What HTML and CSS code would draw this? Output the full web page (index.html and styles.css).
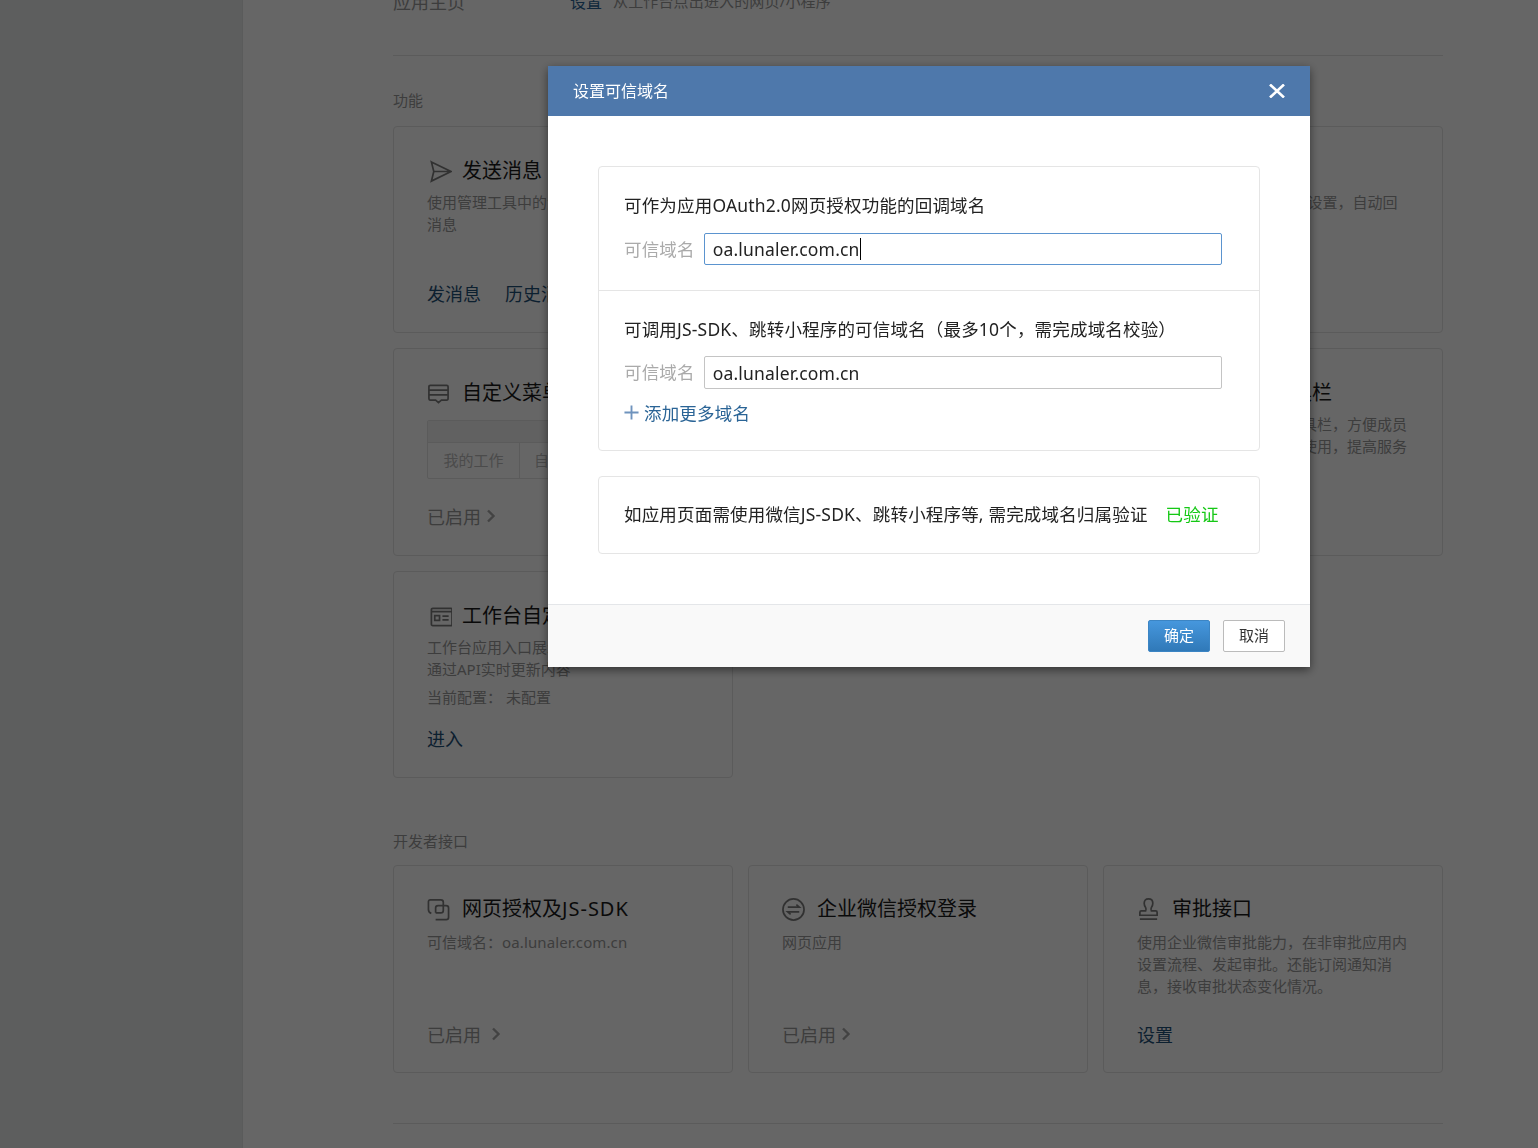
FILE: index.html
```html
<!DOCTYPE html>
<html lang="zh-CN">
<head>
    <meta charset="UTF-8">
    <title>设置可信域名</title>
    <link rel="stylesheet" href="styles.css">
</head>
<body>
    <aside class="sidebar"></aside>

    <main class="content">
        <div class="home-row">
            <span class="home-label">应用主页</span>
            <a class="home-link">设置</a>
            <span class="home-desc">从工作台点出进入的网页/小程序</span>
        </div>

        <h2 class="section-title">功能</h2>
        <div class="grid grid-features">
            <article class="card">
                <h3 class="card-title">
                    <svg class="card-icon icon-shift" viewBox="0 0 24 24"><path d="M2.500 2 L23 12 L2.500 22 L5 12 Z M5 12 H23"/></svg>
                    发送消息
                </h3>
                <p class="card-desc">使用管理工具中的消息群发功能发送应用消息</p>
                <div class="card-foot"><a>发消息</a><a>历史消息</a></div>
            </article>
            <article class="card">
                <h3 class="card-title">
                    <svg class="card-icon" viewBox="0 0 24 24"><path d="M3 4 H21 V18 H3 Z"/></svg>
                    接收消息
                </h3>
                <p class="card-desc">配置服务器接收成员发送给应用的消息</p>
                <div class="card-foot"><a>设置</a></div>
            </article>
            <article class="card">
                <h3 class="card-title">
                    <svg class="card-icon" viewBox="0 0 24 24"><path d="M3 5 H21 V19 H3 Z"/></svg>
                    自动回复
                </h3>
                <p class="card-desc">可在接收消息/回复中进行设置，自动回复成员发送的消息</p>
                <div class="card-foot"><a>设置</a></div>
            </article>

            <article class="card">
                <h3 class="card-title">
                    <svg class="card-icon" viewBox="0 0 24 24"><path d="M3.500 3.500 H20.500 Q22 3.500 22 5 V17 Q22 19 20.500 19 H15 L12 21.500 L9 19 H3.500 Q2 19 2 17 V5 Q2 3.500 3.500 3.500 Z M2 8.500 H22 M2 13.500 H22"/></svg>
                    自定义菜单
                </h3>
                <div class="menu-preview">
                    <div class="menu-bar"></div>
                    <div class="menu-items"><span>我的工作</span><span>自定义项</span><span>更多</span></div>
                </div>
                <div class="card-foot card-status">
                    <span>已启用</span>
                    <svg class="chevron" viewBox="0 0 10 14"><path d="M2 1.500 L7.500 7 L2 12.500"/></svg>
                </div>
            </article>
            <article class="card">
                <h3 class="card-title">
                    <svg class="card-icon" viewBox="0 0 24 24"><path d="M3 4 H21 V18 H3 Z"/></svg>
                    网页授权
                </h3>
                <p class="card-desc">应用可通过网页获取成员的身份信息</p>
            </article>
            <article class="card">
                <h3 class="card-title">
                    <svg class="card-icon" viewBox="0 0 24 24"><path d="M3 5 H21 V19 H3 Z"/></svg>
                    配置到聊天工具栏
                </h3>
                <p class="card-desc">可以把应用配置到聊天工具栏，方便成员在会话中可随时快捷打开使用，提高服务</p>
            </article>

            <article class="card">
                <h3 class="card-title">
                    <svg class="card-icon icon-shift" viewBox="0 0 24 24"><path d="M4 3.500 H23 Q24 3.500 24 5 V20 Q24 21.500 23 21.500 H4 Q2.500 21.500 2.500 20 V5 Q2.500 3.500 4 3.500 Z M2.500 7 H24 M6 11 H11 V16 H6 Z M14 11.500 H20.500 M14 15.500 H20.500"/></svg>
                    工作台自定义展示
                </h3>
                <p class="card-desc">工作台应用入口展示样式可自定义，并可通过API实时更新内容</p>
                <p class="card-config"><span>当前配置：</span><span>未配置</span></p>
                <div class="card-foot"><a>进入</a></div>
            </article>
        </div>

        <h2 class="section-title section-api">开发者接口</h2>
        <div class="grid grid-api">
            <article class="card">
                <h3 class="card-title">
                    <svg class="card-icon" viewBox="0 0 24 24"><path d="M9 2 H3.500 Q1.500 2 1.500 4 V12 Q1.500 15 4.500 16 M9 15.500 V10.500 Q9 8 11.500 8 H20 Q22.500 8 22.500 10.500 V20 Q22.500 22.500 20 22.500 H9 M9 2 H14.500 Q17 2 17 4.500 V13 Q17 15.500 14.500 15.500 H9"/></svg>
                    <span>网页授权及<span class="latin-wide">JS-SDK</span></span>
                </h3>
                <p class="card-desc">可信域名：<span class="domain">oa.lunaler.com.cn</span></p>
                <div class="card-foot card-status status-wide">
                    <span>已启用</span>
                    <svg class="chevron" viewBox="0 0 10 14"><path d="M2 1.500 L7.500 7 L2 12.500"/></svg>
                </div>
            </article>
            <article class="card">
                <h3 class="card-title">
                    <svg class="card-icon" viewBox="0 0 24 24"><circle cx="12" cy="12" r="11"/><path d="M6 9.500 H18 L15 7 M18 14.500 H6 L9 17"/></svg>
                    企业微信授权登录
                </h3>
                <p class="card-desc">网页应用</p>
                <div class="card-foot card-status">
                    <span>已启用</span>
                    <svg class="chevron" viewBox="0 0 10 14"><path d="M2 1.500 L7.500 7 L2 12.500"/></svg>
                </div>
            </article>
            <article class="card">
                <h3 class="card-title">
                    <svg class="card-icon" viewBox="0 0 24 24"><path d="M12 1 Q16.500 1 16.500 5.500 Q16.500 8 15 10 Q14 12 15 13.500 H19.500 Q21 13.500 21 15 V18 H3 V15 Q3 13.500 4.500 13.500 H9 Q10 12 9 10 Q7.500 8 7.500 5.500 Q7.500 1 12 1 Z M3 22 H21"/></svg>
                    审批接口
                </h3>
                <p class="card-desc">使用企业微信审批能力，在非审批应用内设置流程、发起审批。还能订阅通知消息，接收审批状态变化情况。</p>
                <div class="card-foot"><a>设置</a></div>
            </article>
        </div>
        <div class="page-end"></div>
    </main>

    <div class="mask"></div>

    <section class="modal">
        <header class="modal-head">
            <h1>设置可信域名</h1>
            <svg class="modal-close" viewBox="0 0 16 14"><path d="M1 .500 L15 13.500 M15 .500 L1 13.500"/></svg>
        </header>

        <div class="modal-body">
            <div class="panel">
                <div class="panel-part">
                    <p class="panel-text">可作为应用OAuth2.0网页授权功能的回调域名</p>
                    <div class="field-row">
                        <label class="field-label">可信域名</label>
                        <div class="field field-focus">oa.lunaler.com.cn<i class="caret"></i></div>
                    </div>
                </div>
                <div class="panel-part">
                    <p class="panel-text">可调用JS-SDK、跳转小程序的可信域名（最多10个，需完成域名校验）</p>
                    <div class="field-row field-row-tall">
                        <label class="field-label">可信域名</label>
                        <div class="field">oa.lunaler.com.cn</div>
                    </div>
                    <a class="add-more">
                        <svg class="add-icon" viewBox="0 0 16 16"><path d="M8 .500 V15.500 M.500 8 H15.500"/></svg>
                        添加更多域名
                    </a>
                </div>
            </div>

            <div class="panel panel-verify">
                <span>如应用页面需使用微信JS-SDK、跳转小程序等, 需完成域名归属验证</span>
                <span class="verified">已验证</span>
            </div>
        </div>

        <footer class="modal-foot">
            <button class="btn btn-primary">确定</button>
            <button class="btn">取消</button>
        </footer>
    </section>
</body>
</html>
```

FILE: styles.css
```css
* {
    box-sizing: border-box;
}
html, body {
    height: 100%;
}
body {
    margin: 0;
    display: flex;
    overflow: hidden;
    background-color: #ffffff;
    color: #1a1a1a;
    font-family: "Noto Sans", "Noto Sans CJK SC", sans-serif;
    font-size: 15px;
}
a {
    color: #2a6496;
    text-decoration: none;
}
h1, h2, h3, p {
    margin: 0;
    font-weight: normal;
}
.sidebar {
    flex: none;
    width: 243px;
    background-color: #e9eceb;
    border-right: 1px solid #e2e4e3;
}
.content {
    flex: none;
    width: 1050px;
    margin-left: 150px;
}
.home-row {
    display: flex;
    align-items: center;
    height: 69px;
    margin-top: -13px;
    padding-bottom: 41px;
    border-bottom: 1px solid #e4e4e4;
    color: #999999;
}
.home-label {
    width: 177px;
    font-size: 18px;
}
.home-link {
    width: 43px;
    font-size: 16px;
}
.home-desc {
    letter-spacing: .15px;
}
.section-title {
    height: 22px;
    margin: 33px 0 15px;
    color: #999999;
    font-size: 15px;
    line-height: 22px;
}
.section-api {
    margin: 52px 0 13px;
}
.grid {
    display: grid;
    grid-template-columns: repeat(3, 340px);
    gap: 15px;
}
.grid-features {
    grid-template-rows: 207px 208px 207px;
}
.grid-api {
    grid-template-rows: 208px;
}
.card {
    display: flex;
    flex-direction: column;
    padding: 29px 34px 24px 33px;
    border: 1px solid #e4e4e4;
    border-radius: 4px;
}
.grid-api .card {
    padding-top: 28px;
    padding-bottom: 23px;
}
.grid-api .card-title {
    margin-bottom: 7px;
}
.card-title {
    display: flex;
    align-items: center;
    gap: 12px;
    height: 30px;
    margin-bottom: 5px;
    font-size: 20px;
    line-height: 30px;
}
.latin-wide {
    letter-spacing: 1px;
}
.domain {
    letter-spacing: .12px;
}
.card-icon {
    flex: none;
    width: 23px;
    height: 23px;
    fill: none;
    stroke: #7c7c7c;
    stroke-width: 1.8;
}
.icon-shift {
    margin: 0 -2px 0 2px;
}
.card-desc, .card-config {
    color: #999999;
    line-height: 22px;
}
.card-config {
    display: flex;
    gap: 4px;
    margin-top: 6px;
}
.card-foot {
    display: flex;
    align-items: center;
    gap: 24px;
    height: 30px;
    margin-top: auto;
    font-size: 18px;
}
.card-foot a {
    color: #1f5078;
}
.card-status {
    gap: 5px;
    color: #999999;
}
.status-wide {
    gap: 10px;
}
.chevron {
    width: 10px;
    height: 14px;
    fill: none;
    stroke: #a8a8a8;
    stroke-width: 2.4;
}
.menu-preview {
    height: 59px;
    margin-top: 7px;
    border: 1px solid #e4e4e4;
    border-radius: 2px;
}
.menu-bar {
    height: 22px;
    background-color: #f2f2f2;
    border-bottom: 1px solid #e4e4e4;
}
.menu-items {
    display: grid;
    grid-template-columns: 91px 1fr 1fr;
    height: 35px;
    color: #bbbbbb;
    line-height: 35px;
    text-align: center;
}
.menu-items span + span {
    border-left: 1px solid #e4e4e4;
}
.page-end {
    margin-top: 50px;
    border-top: 1px solid #e4e4e4;
}
.mask {
    position: fixed;
    top: 0;
    left: 0;
    right: 0;
    bottom: 0;
    background-color: rgba(0, 0, 0, 0.6);
}
.modal {
    position: fixed;
    top: 66px;
    left: 548px;
    width: 762px;
    background-color: #ffffff;
    box-shadow: 0 3px 9px rgba(0, 0, 0, 0.5);
}
.modal-head {
    display: flex;
    align-items: center;
    justify-content: space-between;
    height: 50px;
    padding: 0 25px;
    background-color: #4e78ab;
    color: #ffffff;
}
.modal-head h1 {
    padding-bottom: 2px;
    font-size: 16px;
}
.modal-close {
    width: 16px;
    height: 14px;
    fill: none;
    stroke: #ffffff;
    stroke-width: 2.6;
}
.modal-body {
    display: flex;
    flex-direction: column;
    gap: 25px;
    padding: 50px;
    color: #222222;
    font-size: 17.5px;
    letter-spacing: .18px;
}
.panel {
    border: 1px solid #e5e5e5;
    border-radius: 4px;
}
.panel-part {
    padding: 23px 25px 25px;
}
.panel-part + .panel-part {
    padding-bottom: 23px;
    border-top: 1px solid #e5e5e5;
}
.panel-text {
    height: 30px;
    line-height: 30px;
}
.field-row {
    display: flex;
    align-items: center;
    gap: 9px;
    margin-top: 13px;
}
.field-row-tall {
    margin-top: 12px;
}
.field-label {
    padding-bottom: 2px;
    color: #aaaaaa;
}
.field {
    display: flex;
    align-items: center;
    width: 518px;
    height: 32px;
    padding: 0 8px;
    border: 1px solid #c4c4c4;
    border-radius: 2px;
}
.field-row-tall .field {
    height: 33px;
}
.field-focus {
    border-color: #5b94cf;
}
.caret {
    width: 1px;
    height: 22px;
    background-color: #000000;
}
.add-more {
    display: flex;
    align-items: center;
    gap: 5px;
    height: 30px;
    margin-top: 8px;
}
.add-icon {
    width: 15px;
    height: 15px;
    fill: none;
    stroke: #6f93bd;
    stroke-width: 2;
}
.panel-verify {
    display: flex;
    align-items: center;
    gap: 18px;
    height: 78px;
    padding: 0 25px 4px;
}
.verified {
    color: #15c815;
}
.modal-foot {
    display: flex;
    justify-content: flex-end;
    gap: 13px;
    height: 63px;
    padding: 15px 25px 0;
    background-color: #f9f9f9;
    border-top: 1px solid #e4e6e9;
}
.btn {
    width: 62px;
    height: 32px;
    padding: 0 0 4px;
    background-color: #ffffff;
    border: 1px solid #bbbbbb;
    border-radius: 2px;
    color: #333333;
    font-family: inherit;
    font-size: 15px;
}
.btn-primary {
    background: linear-gradient(#4697dd, #3079b8);
    border-color: #3c85c4;
    color: #ffffff;
}
```
